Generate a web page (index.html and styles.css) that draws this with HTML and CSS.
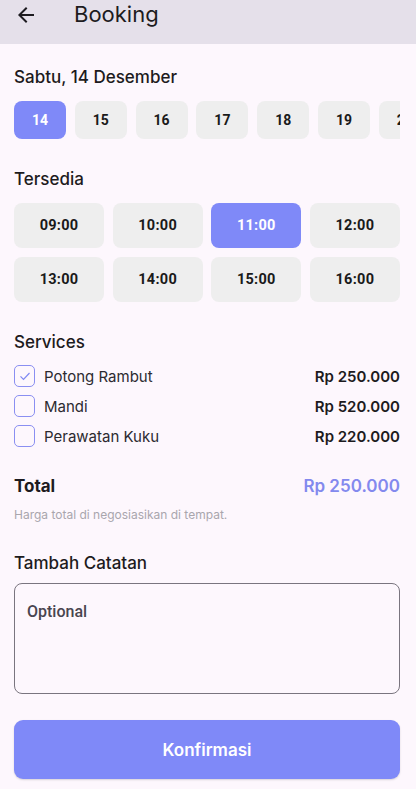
FILE: index.html
```html
<!DOCTYPE html>
<html lang="id">
<head>
<meta charset="utf-8">
<title>Booking</title>
<link rel="stylesheet" href="styles.css">
</head>
<body>
<header class="appbar">
  <svg class="back" width="24" height="24" viewBox="0 0 24 24"><path d="M20 11H7.83l5.59-5.59L12 4l-8 8 8 8 1.41-1.41L7.83 13H20v-2z" fill="#1d1b20"/></svg>
  <h1 class="title">Booking</h1>
</header>
<main class="content">
  <h2 class="heading h-date">Sabtu, 14 Desember</h2>
  <div class="dates">
    <div class="chip date active">14</div>
    <div class="chip date">15</div>
    <div class="chip date">16</div>
    <div class="chip date">17</div>
    <div class="chip date">18</div>
    <div class="chip date">19</div>
    <div class="chip date">20</div>
  </div>

  <h2 class="heading h-sec">Tersedia</h2>
  <div class="times">
    <div class="chip time">09:00</div>
    <div class="chip time">10:00</div>
    <div class="chip time active">11:00</div>
    <div class="chip time">12:00</div>
    <div class="chip time">13:00</div>
    <div class="chip time">14:00</div>
    <div class="chip time">15:00</div>
    <div class="chip time">16:00</div>
  </div>

  <h2 class="heading h-sec">Services</h2>
  <div class="services">
    <div class="svc">
      <span class="box"><svg width="14" height="14" viewBox="0 0 14 14"><path d="M2.5 7.3l3 3 6-6.3" fill="none" stroke="#7f88f2" stroke-width="1.2"/></svg></span>
      <span class="svc-name">Potong Rambut</span>
      <span class="price">Rp 250.000</span>
    </div>
    <div class="svc">
      <span class="box"></span>
      <span class="svc-name">Mandi</span>
      <span class="price">Rp 520.000</span>
    </div>
    <div class="svc">
      <span class="box"></span>
      <span class="svc-name">Perawatan Kuku</span>
      <span class="price">Rp 220.000</span>
    </div>
  </div>

  <div class="total">
    <span class="total-label">Total</span>
    <span class="total-value">Rp 250.000</span>
  </div>
  <p class="note">Harga total di negosiasikan di tempat.</p>

  <h2 class="heading h-sec">Tambah Catatan</h2>
  <div class="textarea">Optional</div>

  <button class="confirm">Konfirmasi</button>
</main>
</body>
</html>
```
FILE: styles.css
```css
* { box-sizing: border-box; }
html, body { margin: 0; padding: 0; }
body {
  background: #fdf7fd;
  font-family: Inter, "Noto Sans", sans-serif;
  color: #1d1b20;
  width: 416px;
  height: 789px;
  overflow: hidden;
}
.appbar {
  height: 44px;
  background: #e5e0ea;
  display: flex;
  align-items: flex-start;
}
.back {
  margin: 3px 0 0 14px;
  flex: none;
}
.title {
  margin: 0 0 0 36px;
  font-size: 22px;
  font-weight: 400;
  line-height: 28px;
  color: #1d1b20;
  letter-spacing: 0;
}
.content {
  padding: 0 16px 0 14px;
}
.heading {
  margin: 0;
  font-size: 17px;
  font-weight: 500;
  line-height: 24px;
  color: #1d1b20;
}
.h-date { margin-top: 21px; }
.h-sec { margin-top: 28px; }
.dates {
  margin-top: 12px;
  display: flex;
  gap: 8.8px;
  overflow: hidden;
  width: 386px;
}
.chip {
  background: #eeeeee;
  border-radius: 8px;
  display: flex;
  align-items: center;
  justify-content: center;
  font-family: Roboto, "Liberation Sans", sans-serif;
  font-weight: 700;
  font-size: 14px;
  color: #1a1a1a;
}
.chip.active {
  background: #7f89f8;
  color: #ffffff;
}
.date {
  flex: none;
  width: 52px;
  height: 38px;
}
.times {
  margin-top: 12px;
  display: grid;
  grid-template-columns: repeat(4, 1fr);
  column-gap: 8.5px;
  row-gap: 9px;
  width: 386px;
}
.time {
  height: 45px;
  font-size: 14.5px;
  letter-spacing: 0.3px;
}
.services {
  margin-top: 11px;
  display: flex;
  flex-direction: column;
  gap: 8px;
  width: 386px;
}
.svc {
  height: 22px;
  display: flex;
  align-items: center;
}
.box {
  width: 21px;
  height: 22px;
  border: 1.5px solid #8a8ff2;
  border-radius: 5px;
  display: flex;
  align-items: center;
  justify-content: center;
  flex: none;
}
.svc-name {
  margin-left: 9px;
  font-size: 15px;
  color: #2c2a30;
  flex: 1;
}
.price {
  font-size: 15px;
  font-weight: 600;
  color: #1d1b20;
}
.total {
  margin-top: 27px;
  height: 24px;
  width: 386px;
  display: flex;
  align-items: center;
  justify-content: space-between;
}
.total-label {
  font-size: 17px;
  font-weight: 700;
  color: #1d1b20;
}
.total-value {
  font-size: 17px;
  font-weight: 600;
  color: #8389ee;
}
.note {
  margin: 9px 0 0;
  font-size: 12px;
  line-height: 16px;
  color: #a9a6ad;
}
.textarea {
  margin-top: 8px;
  width: 386px;
  height: 111px;
  border: 1px solid #7a757f;
  border-radius: 8px;
  padding: 18px 12px 0;
  font-family: Roboto, "Liberation Sans", sans-serif;
  font-size: 16px;
  font-weight: 500;
  color: #49454f;
  line-height: 20px;
}
.confirm {
  display: block;
  margin-top: 26px;
  width: 386px;
  height: 59px;
  border: none;
  border-radius: 9px;
  background: #7f89f8;
  color: #ffffff;
  font-family: Inter, "Noto Sans", sans-serif;
  font-size: 17px;
  font-weight: 600;
  box-shadow: 0 1px 2px rgba(0,0,0,0.15);
}
```
